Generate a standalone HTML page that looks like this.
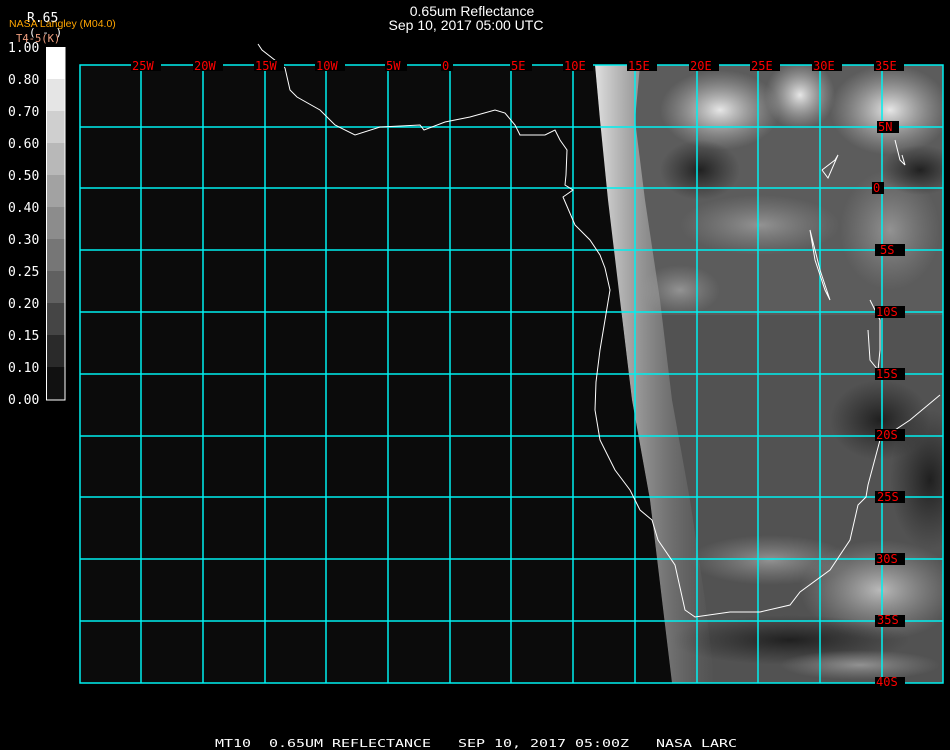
<!DOCTYPE html>
<html><head><meta charset="utf-8"><style>
html,body{margin:0;padding:0;background:#000;width:950px;height:750px;overflow:hidden}
svg{display:block}
.lab{font-family:"DejaVu Sans Mono","Liberation Mono",monospace;font-size:12px;fill:#f00}
.cb{font-family:"DejaVu Sans Mono","Liberation Mono",monospace;font-size:13px;fill:#fff}
</style></head><body>
<svg width="950" height="750" viewBox="0 0 950 750" xmlns="http://www.w3.org/2000/svg">
<defs>
<clipPath id="dc"><polygon points="595,65 943,65 943,683 672,683 662,600 650,500 632,400 620,300 608,200 600,120"/></clipPath>
<radialGradient id="w"><stop offset="0" stop-color="#eee" stop-opacity=".95"/><stop offset="1" stop-color="#bbb" stop-opacity="0"/></radialGradient>
<radialGradient id="g"><stop offset="0" stop-color="#999" stop-opacity=".9"/><stop offset="1" stop-color="#888" stop-opacity="0"/></radialGradient>
<radialGradient id="d"><stop offset="0" stop-color="#1a1a1a" stop-opacity=".9"/><stop offset="1" stop-color="#222" stop-opacity="0"/></radialGradient>
<linearGradient id="edge" x1="0" x2="1"><stop offset="0" stop-color="#e0e0e0"/><stop offset=".35" stop-color="#aaa" stop-opacity=".8"/><stop offset="1" stop-color="#777" stop-opacity="0"/></linearGradient>
</defs>
<rect x="80" y="65" width="863" height="618" fill="#0b0b0b"/>
<g clip-path="url(#dc)">
<rect x="590" y="65" width="360" height="620" fill="#525252"/>
<rect x="590" y="65" width="360" height="250" fill="#5c5c5c"/>
<ellipse cx="720" cy="110" rx="60" ry="40" fill="url(#w)"/>
<ellipse cx="800" cy="95" rx="35" ry="35" fill="url(#w)"/>
<ellipse cx="890" cy="110" rx="60" ry="45" fill="url(#w)"/>
<ellipse cx="760" cy="225" rx="80" ry="30" fill="url(#g)"/>
<ellipse cx="890" cy="230" rx="50" ry="60" fill="url(#g)"/>
<ellipse cx="700" cy="170" rx="40" ry="30" fill="url(#d)"/>
<ellipse cx="920" cy="170" rx="40" ry="25" fill="url(#d)"/>
<ellipse cx="680" cy="290" rx="40" ry="25" fill="url(#g)"/>
<ellipse cx="880" cy="420" rx="50" ry="40" fill="url(#d)"/>
<ellipse cx="930" cy="480" rx="40" ry="70" fill="url(#d)"/>
<ellipse cx="770" cy="560" rx="80" ry="25" fill="url(#g)"/>
<ellipse cx="880" cy="590" rx="80" ry="50" fill="url(#w)" opacity=".7"/>
<ellipse cx="790" cy="640" rx="120" ry="25" fill="url(#d)"/>
<ellipse cx="860" cy="665" rx="80" ry="15" fill="url(#g)"/>
<polygon points="595,65 640,65 635,120 645,200 660,300 672,400 690,500 705,600 715,683 672,683 662,600 650,500 632,400 620,300 608,200 600,120" fill="url(#edge)"/>
</g>
<g stroke="#00f0f0" stroke-width="1.5" fill="none">
<path d="M141,65V683M203,65V683M265,65V683M326,65V683M388,65V683M450,65V683M511,65V683M573,65V683M635,65V683M697,65V683M758,65V683M820,65V683M882,65V683"/>
<path d="M80,127H943M80,188H943M80,250H943M80,312H943M80,374H943M80,436H943M80,497H943M80,559H943M80,621H943"/>
<rect x="80" y="65" width="863" height="618"/>
</g>
<polyline fill="none" stroke="#fff" stroke-width="1" points="258,44 262,50 285,68 290,90 297,97 320,110 335,125 355,135 380,127 420,125 424,130 445,122 470,117 495,110 505,113 515,125 520,135 545,135 555,130 560,140 567,150 566,175 565,185 573,190 563,197 575,225 590,240 600,255 605,268 610,290 605,320 600,350 596,382 595,410 600,440 615,470 630,490 640,510 652,520 658,540 675,565 685,610 695,617 730,612 760,612 790,605 800,592 830,570 850,540 858,505 866,497 868,485 880,440 910,420 940,395"/>
<polyline fill="none" stroke="#fff" stroke-width="1" points="822,170 835,160 838,155 828,178 822,170"/>
<polyline fill="none" stroke="#fff" stroke-width="1" points="895,140 900,160 905,165 902,155"/>
<polyline fill="none" stroke="#fff" stroke-width="1" points="810,230 815,250 820,270 830,300 825,290 815,260 810,230"/>
<polyline fill="none" stroke="#fff" stroke-width="1" points="870,300 880,320 880,350 878,370 870,360 868,330"/>
<g>
<g fill="#000">
<rect x="131" y="60" width="30" height="11"/><rect x="193" y="60" width="30" height="11"/><rect x="254" y="60" width="30" height="11"/><rect x="315" y="60" width="30" height="11"/><rect x="385" y="60" width="22" height="11"/><rect x="441" y="60" width="12" height="11"/><rect x="510" y="60" width="22" height="11"/><rect x="563" y="60" width="30" height="11"/><rect x="627" y="60" width="30" height="11"/><rect x="689" y="60" width="30" height="11"/><rect x="750" y="60" width="30" height="11"/><rect x="812" y="60" width="30" height="11"/><rect x="874" y="60" width="30" height="11"/>
</g>
<text class="lab" y="70"><tspan x="132">25W</tspan><tspan x="194">20W</tspan><tspan x="255">15W</tspan><tspan x="316">10W</tspan><tspan x="386">5W</tspan><tspan x="442">0</tspan><tspan x="511">5E</tspan><tspan x="564">10E</tspan><tspan x="628">15E</tspan><tspan x="690">20E</tspan><tspan x="751">25E</tspan><tspan x="813">30E</tspan><tspan x="875">35E</tspan></text>
<g fill="#000"><rect x="875" y="244" width="30" height="12"/><rect x="875" y="306" width="30" height="12"/><rect x="875" y="368" width="30" height="12"/><rect x="875" y="429" width="30" height="12"/><rect x="875" y="491" width="30" height="12"/><rect x="875" y="553" width="30" height="12"/><rect x="875" y="615" width="30" height="12"/><rect x="875" y="677" width="30" height="12"/><rect x="877" y="121" width="22" height="12"/><rect x="872" y="182" width="12" height="12"/></g>
<text class="lab"><tspan x="878" y="131">5N</tspan><tspan x="873" y="192">0</tspan><tspan x="880" y="254">5S</tspan><tspan x="876" y="316">10S</tspan><tspan x="876" y="378">15S</tspan><tspan x="876" y="439">20S</tspan><tspan x="877" y="501">25S</tspan><tspan x="876" y="563">30S</tspan><tspan x="877" y="624">35S</tspan><tspan x="876" y="686">40S</tspan></text>
</g>
<text x="472" y="16" text-anchor="middle" font-family="Liberation Sans,sans-serif" font-size="14" fill="#fff">0.65um Reflectance</text>
<text x="466" y="30" text-anchor="middle" font-family="Liberation Sans,sans-serif" font-size="14" fill="#fff">Sep 10, 2017 05:00 UTC</text>
<text x="27" y="22" font-family="DejaVu Sans Mono,monospace" font-size="13" fill="#fff">R.65</text>
<text x="29" y="36" font-family="DejaVu Sans Mono,monospace" font-size="11" fill="#fff">( - )</text>
<text x="9" y="27" font-family="Liberation Sans,sans-serif" font-size="10.5" fill="#ffa500">NASA Langley (M04.0)</text>
<text x="16" y="42" font-family="DejaVu Sans Mono,monospace" font-size="10.5" fill="#f0a080">T4-5(K)</text>
<g>
<rect x="46" y="47" width="19" height="32" fill="#fff"/>
<rect x="46" y="79" width="19" height="32" fill="#e5e5e5"/>
<rect x="46" y="111" width="19" height="32" fill="#cfcfcf"/>
<rect x="46" y="143" width="19" height="32" fill="#b8b8b8"/>
<rect x="46" y="175" width="19" height="32" fill="#a2a2a2"/>
<rect x="46" y="207" width="19" height="32" fill="#8c8c8c"/>
<rect x="46" y="239" width="19" height="32" fill="#767676"/>
<rect x="46" y="271" width="19" height="32" fill="#606060"/>
<rect x="46" y="303" width="19" height="32" fill="#454545"/>
<rect x="46" y="335" width="19" height="32" fill="#2a2a2a"/>
<rect x="46" y="367" width="19" height="33" fill="#111"/>
<rect x="46.5" y="47.5" width="18.5" height="352.5" fill="none" stroke="#fff" stroke-width="1"/>
</g>
<text class="cb"><tspan x="8" y="52">1.00</tspan><tspan x="8" y="84">0.80</tspan><tspan x="8" y="116">0.70</tspan><tspan x="8" y="148">0.60</tspan><tspan x="8" y="180">0.50</tspan><tspan x="8" y="212">0.40</tspan><tspan x="8" y="244">0.30</tspan><tspan x="8" y="276">0.25</tspan><tspan x="8" y="308">0.20</tspan><tspan x="8" y="340">0.15</tspan><tspan x="8" y="372">0.10</tspan><tspan x="8" y="404">0.00</tspan></text>
<text x="215" y="747" font-family="DejaVu Sans Mono,monospace" font-size="11" fill="#fff" style="white-space:pre" xml:space="preserve" textLength="522" lengthAdjust="spacingAndGlyphs">MT10  0.65UM REFLECTANCE   SEP 10, 2017 05:00Z   NASA LARC</text>
</svg>
</body></html>
